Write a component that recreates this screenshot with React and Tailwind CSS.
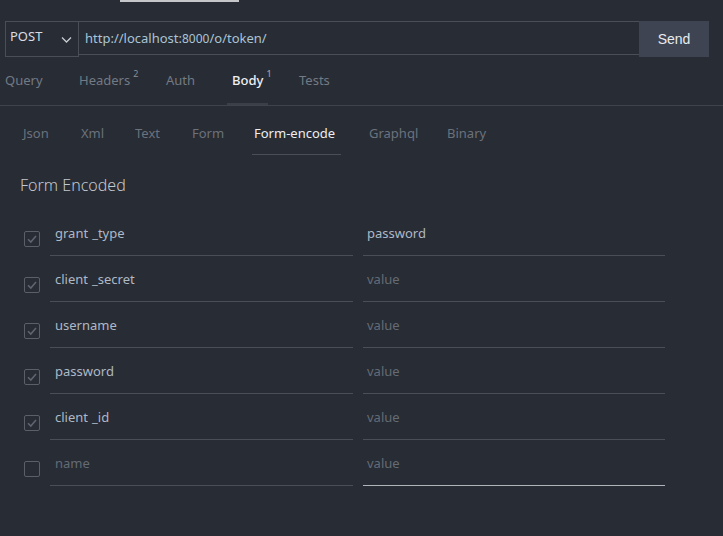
import React from "react";

const font = { fontFamily: '"Noto Sans", "Open Sans", sans-serif' };

function Check({ checked }) {
  return (
    <div className="mt-[21px] ml-[24px] w-[16px] h-[16px] shrink-0 rounded-[2px] border border-[#5a5f68] flex items-center justify-center">
      {checked && (
        <svg width="12" height="12" viewBox="0 0 12 12">
          <path d="M2 6.2 L4.8 9 L10 3" fill="none" stroke="#5f6570" strokeWidth="1.6" />
        </svg>
      )}
    </div>
  );
}

function Key({ parts, placeholder }) {
  return (
    <span>
      {parts ? (
        <span className="text-[#aeb9c6]">
          {parts[0]}
          <span className="ml-[4px]">_</span>
          {parts[1]}
        </span>
      ) : (
        <span className="text-[#646b75]">{placeholder}</span>
      )}
    </span>
  );
}

const rows = [
  { k: ["grant", "type"], v: "password", c: true },
  { k: ["client", "secret"], v: null, c: true },
  { k: "username", v: null, c: true },
  { k: "password", v: null, c: true },
  { k: ["client", "id"], v: null, c: true },
  { k: null, v: null, c: false, last: true },
];

const tabs = [
  { t: "Query", sup: null, w: "w-[74px]" },
  { t: "Headers", sup: "2", w: "w-[87px]" },
  { t: "Auth", sup: null, w: "w-[61px]" },
  { t: "Body", sup: "1", w: "w-[41px] px-[5px]", active: true },
  { t: "Tests", sup: null, w: "ml-[31px]" },
];

const subs = [
  { t: "Json", w: "w-[58px]" },
  { t: "Xml", w: "w-[54px]" },
  { t: "Text", w: "w-[57px]" },
  { t: "Form", w: "w-[60px]" },
  { t: "Form-encode", w: "w-[89px] pl-[2px]", active: true },
  { t: "Graphql", w: "ml-[28px] w-[78px]" },
  { t: "Binary", w: "" },
];

export default function App() {
  return (
    <div className="w-[723px] h-[536px] bg-[#282c34] overflow-hidden text-[13px]" style={font}>
      <div className="pl-[120px]">
        <div className="w-[119px] h-[2px] bg-[#c4c6c9]" />
      </div>

      {/* URL bar */}
      <div className="mt-[19px] ml-[5px] flex items-start">
        <div className="w-[74px] h-[36px] border border-[#4a4e57] flex items-start justify-between pl-[4px] pr-[6px]">
          <span className="mt-[4px] text-[#d8dce2] leading-[20px]">POST</span>
          <svg className="mt-[14px]" width="11" height="8" viewBox="0 0 11 8">
            <path d="M1 1.5 L5.5 6 L10 1.5" fill="none" stroke="#c8ccd2" strokeWidth="1.3" />
          </svg>
        </div>
        <div className="w-[561px] h-[34px] border-y border-[#4a4e57] flex items-center pl-[7px] -ml-px">
          <span className="text-[#aac4d6] leading-[20px]">
            http://localhost:<span className="text-[12px]">8000</span>/o/token/
          </span>
        </div>
        <div
          className="w-[70px] h-[36px] bg-[#3e4451] flex items-center justify-center text-[14px] text-[#e8eaee]"
          style={{ fontFamily: '"Liberation Sans", Arial, sans-serif' }}
        >
          Send
        </div>
      </div>

      {/* Tabs */}
      <div className="h-[49px] border-b border-[#3f434b] flex items-stretch pl-[5px] text-[13px]">
        {tabs.map((tab) => (
          <div key={tab.t} className={`relative flex items-center shrink-0 ${tab.w}`}>
            <span className={tab.active ? "text-[#eef0f3] font-medium whitespace-nowrap" : "text-[#737a84] whitespace-nowrap"}>
              {tab.t}
              {tab.sup && (
                <sup className={`ml-[3px] text-[9px] align-top relative top-[3px] ${tab.active ? "text-[#9aa0a8]" : "text-[#8a9099]"}`}>
                  {tab.sup}
                </sup>
              )}
            </span>
            {tab.active && <span className="absolute left-0 right-0 bottom-0 h-[2px] bg-[#3a3f48]" />}
          </div>
        ))}
      </div>

      {/* Sub tabs */}
      <div className="flex items-start pl-[23px] text-[13px]">
        {subs.map((s) => (
          <div
            key={s.t}
            className={`shrink-0 pt-[17px] pb-[11px] leading-[20px] whitespace-nowrap ${s.w} ${
              s.active ? "border-b border-[#4a4e57] text-[#eceef1]" : "text-[#6b727c] border-b border-transparent"
            }`}
          >
            {s.t}
          </div>
        ))}
      </div>

      <div className="mt-[18px] ml-[20px] text-[16px] leading-[24px] text-[#c3c7ce] font-light">Form Encoded</div>

      <div className="mt-[13px]">
        {rows.map((r, i) => (
          <div key={i} className="flex items-start h-[46px]">
            <Check checked={r.c} />
            <div className="ml-[10px] w-[303px] h-[46px] border-b border-[#4a4e57] pl-[5px] pt-[13px] leading-[20px]">
              {Array.isArray(r.k) ? (
                <Key parts={r.k} />
              ) : r.k ? (
                <span className="text-[#aeb9c6]">{r.k}</span>
              ) : (
                <Key placeholder="name" />
              )}
            </div>
            <div
              className={`ml-[10px] w-[302px] h-[46px] border-b pl-[4px] pt-[13px] leading-[20px] ${
                r.last ? "border-[#b0b3b8]" : "border-[#4a4e57]"
              }`}
            >
              {r.v ? <span className="text-[#aeb9c6]">{r.v}</span> : <span className="text-[#646b75]">value</span>}
            </div>
          </div>
        ))}
      </div>
    </div>
  );
}
